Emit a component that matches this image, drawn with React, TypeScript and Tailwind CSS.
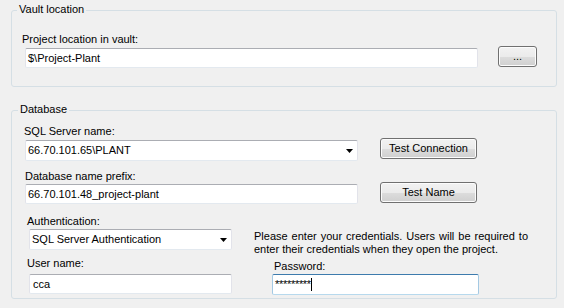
import React from "react";

function TextBox({ className, children, focused }: { className: string; children?: React.ReactNode; focused?: boolean }) {
  return (
    <div
      className={`flex items-center bg-white border rounded-[2px] pl-[2px] ${
        focused
          ? "border-[#a4c9e3] border-t-[#3d7bad] border-b-[#b7d9ed]"
          : "border-[#e2e3ea] border-t-[#abadb3] border-b-[#e3e9ef]"
      } ${className}`}
    >
      {children}
    </div>
  );
}

function Combo({ className, text }: { className: string; text: string }) {
  return (
    <div
      className={`flex items-center justify-between bg-white border rounded-[2px] pl-[2px] pr-[4px] border-[#e2e3ea] border-t-[#abadb3] border-b-[#e3e9ef] ${className}`}
    >
      <span>{text}</span>
      <svg width="7" height="4" viewBox="0 0 7 4" className="block">
        <polygon points="0,0 7,0 3.5,4" fill="#000" />
      </svg>
    </div>
  );
}

function Btn({ className, children }: { className: string; children: React.ReactNode }) {
  return (
    <div
      className={`flex items-center justify-center border border-[#707070] rounded-[3px] bg-[linear-gradient(to_bottom,#f2f2f2_0%,#ebebeb_50%,#dddddd_50%,#cfcfcf_100%)] shadow-[inset_0_0_0_1px_#fcfcfc] ${className}`}
    >
      {children}
    </div>
  );
}

export default function App() {
  return (
    <div className="w-[564px] h-[308px] overflow-hidden bg-[#f0f0f0] text-black font-['Liberation_Sans',Arial,sans-serif] text-[11px] leading-[13px] pt-[10px] pl-[11px]">
      {/* Vault location */}
      <div className="relative w-[546px] h-[77px] border border-[#d5dfe5] rounded-[3px] pt-[22px] pl-[10px]">
        <span className="absolute left-[5px] -top-[8px] px-[2px] bg-[#f0f0f0]">Vault location</span>
        <div>Project location in vault:</div>
        <div className="flex items-start pl-[3px]">
          <TextBox className="mt-[2px] w-[453px] h-[20px]">
            <span>$\Project-Plant</span>
          </TextBox>
          <Btn className="ml-[20px] w-[39px] h-[21px]">...</Btn>
        </div>
      </div>

      {/* Database */}
      <div className="relative mt-[23px] w-[546px] h-[189px] border border-[#d5dfe5] rounded-[3px] pt-[14px] pl-[13px]">
        <span className="absolute left-[6px] -top-[8px] px-[2px] bg-[#f0f0f0]">Database</span>
        <div className="flex items-start">
          <div className="flex flex-col w-[333px]">
            <div className="-ml-[1px]">SQL Server name:</div>
            <Combo className="mt-[2px] w-[333px] h-[21px]" text="66.70.101.65\PLANT" />
            <div className="mt-[9px]">Database name prefix:</div>
            <TextBox className="mt-[1px] w-[333px] h-[20px]">
              <span>66.70.101.48_project-plant</span>
            </TextBox>
          </div>
          <div className="flex flex-col ml-[22px]">
            <Btn className="mt-[13px] w-[97px] h-[21px]">Test Connection</Btn>
            <Btn className="mt-[23px] w-[97px] h-[21px]">Test Name</Btn>
          </div>
        </div>
        <div className="flex items-start mt-[11px]">
          <div className="flex flex-col ml-[4px] w-[203px]">
            <div className="-ml-[2px]">Authentication:</div>
            <Combo className="mt-[1px] w-[203px] h-[21px]" text="SQL Server Authentication" />
            <div className="-ml-[2px] mt-[7px]">User name:</div>
            <TextBox className="mt-[4px] w-[203px] h-[20px]">
              <span className="pl-[1px]">cca</span>
            </TextBox>
          </div>
          <div className="flex flex-col ml-[22px] w-[274px] mt-[15px]">
            <p className="text-justify">
              Please enter your credentials. Users will be required to enter their credentials when they open the project.
            </p>
            <div className="mt-[4px] ml-[20px]">Password:</div>
            <TextBox focused className="mt-[1px] ml-[18px] w-[207px] h-[21px]">
              <span className="tracking-[-0.3px]">*********</span>
              <span className="inline-block w-[1px] h-[13px] bg-black"></span>
            </TextBox>
          </div>
        </div>
      </div>
    </div>
  );
}
